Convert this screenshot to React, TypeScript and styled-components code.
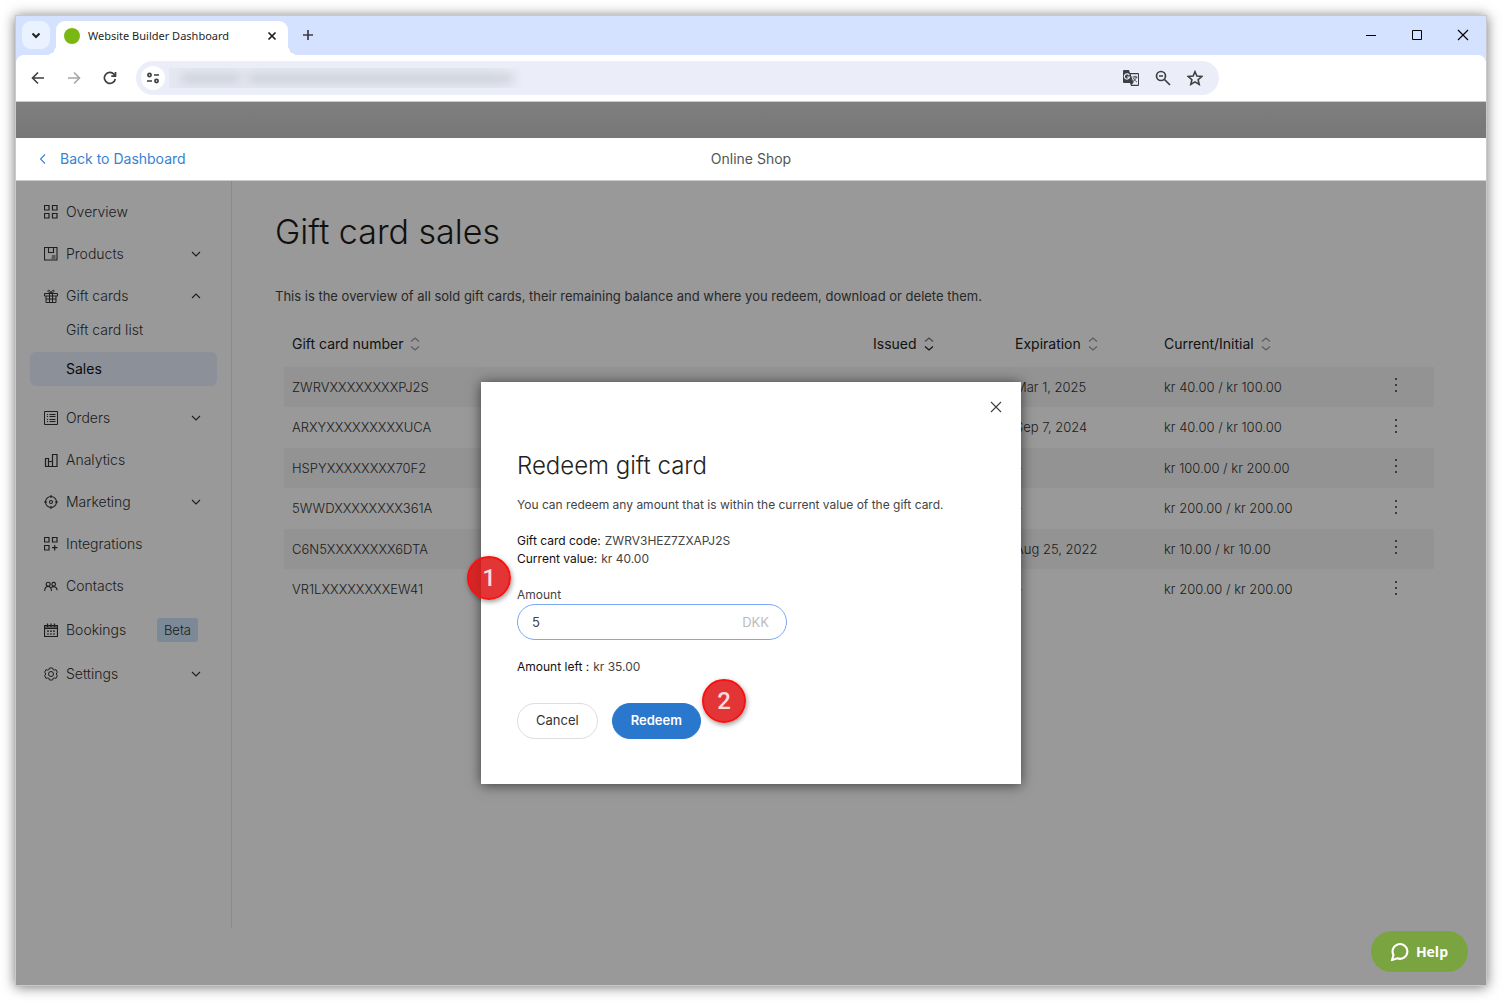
import React, { useState } from "react";
import styled, { createGlobalStyle, css } from "styled-components";

const GlobalStyle = createGlobalStyle`
  *, *::before, *::after { box-sizing: border-box; }
  body { margin: 0; background: #fff; font-family: Inter, "Open Sans", sans-serif; font-size: 14px; line-height: 20px; color: #444; }
  button { border: 0; padding: 0; background: none; color: inherit; font: inherit; cursor: pointer; }
  h1, h2, p, ul, dl, dd { margin: 0; padding: 0; }
  ul { list-style: none; }
  svg { display: block; flex: none; }
`;

const Page = styled.div`
  display: flex;
  min-height: 100vh;
  padding: 15px;
`;

const Window = styled.div`
  flex: 1;
  min-width: 0;
  display: flex;
  flex-direction: column;
  border: 1px solid #c9c9c9;
  background: #d5e2ff;
  box-shadow: 0 1px 12px rgba(0, 0, 0, 0.55);
`;

const TitleBar = styled.div`
  display: flex;
  align-items: flex-start;
  height: 39px;
  padding: 5px 0 0 6px;
`;

const TabSearch = styled.button`
  display: grid;
  place-items: center;
  width: 28px;
  height: 28px;
  margin-right: 6px;
  border-radius: 9px;
  background: #ebf2ff;
  color: #1f1f1f;
`;

const Tab = styled.div`
  position: relative;
  display: flex;
  align-items: center;
  gap: 8px;
  width: 232px;
  height: 34px;
  padding: 0 8px 5px;
  border-radius: 9px 9px 0 0;
  background: #fff;
  color: #1f1f1f;
  font: 11px/16px "Noto Sans", "Open Sans", sans-serif;
  &::before, &::after {
    content: "";
    position: absolute;
    bottom: 0;
    width: 10px;
    height: 10px;
  }
  &::before { right: 100%; background: radial-gradient(circle at 0 0, transparent 10px, #fff 10px); }
  &::after { left: 100%; background: radial-gradient(circle at 100% 0, transparent 10px, #fff 10px); }
`;

const Favicon = styled.span`
  width: 16px;
  height: 16px;
  border-radius: 50%;
  background: #7bb713;
`;

const TabTitle = styled.span`
  flex: 1;
  white-space: nowrap;
`;

const IconButton = styled.button<{ $size?: number; $color?: string }>`
  display: grid;
  place-items: center;
  flex: none;
  width: ${(p) => p.$size ?? 24}px;
  height: ${(p) => p.$size ?? 24}px;
  color: ${(p) => p.$color ?? "#3c3f43"};
`;

const NewTab = styled(IconButton)`
  margin: 2px 0 0 8px;
`;

const WindowControls = styled.div`
  display: flex;
  margin-left: auto;
  button { width: 46px; height: 28px; color: #000; }
`;

const Toolbar = styled.div`
  display: flex;
  align-items: center;
  gap: 12px;
  height: 47px;
  padding: 0 267px 0 10px;
  border-bottom: 1px solid #ccc;
  border-radius: 8px 8px 0 0;
  background: #fff;
`;

const NavButtons = styled.div`
  display: flex;
  gap: 12px;
  margin-right: 2px;
`;

const AddressBar = styled.div`
  flex: 1;
  display: flex;
  align-items: center;
  height: 34px;
  padding: 0 12px 0 5px;
  border-radius: 17px;
  background: #ebeef8;
`;

const SiteInfo = styled(IconButton)`
  border-radius: 50%;
  background: #fff;
  margin-right: 4px;
`;

const BlurredAddress = styled.div`
  display: flex;
  align-items: center;
  gap: 8px;
  width: 356px;
  height: 20px;
  padding: 0 12px;
  overflow: hidden;
  background: linear-gradient(90deg, #e5e8f1 90%, #ebeef8);
`;

const Smudge = styled.span<{ $grow: number }>`
  flex: ${(p) => p.$grow};
  height: 9px;
  background: #cdd0da;
  filter: blur(5px);
`;

const AddressActions = styled.div`
  display: flex;
  gap: 8px;
  margin-left: auto;
`;

const TopStrip = styled.div`
  height: 36px;
  background: linear-gradient(#7f7f7f, #777);
`;

const Header = styled.header`
  display: grid;
  grid-template-columns: 1fr auto 1fr;
  align-items: center;
  height: 43px;
  padding: 0 21px;
  border-bottom: 1px solid #ccc;
  background: #fff;
  color: #555;
`;

const BackLink = styled.a`
  display: flex;
  align-items: center;
  gap: 11px;
  color: #3583d3;
  text-decoration: none;
`;

const Workspace = styled.div`
  position: relative;
  flex: 1;
  display: flex;
  align-items: stretch;
  background: #fff;
`;

const Sidebar = styled.nav`
  width: 216px;
  flex: none;
  margin-bottom: 57px;
  padding: 14px;
  border-right: 1px solid #e8e8e8;
`;

const NavList = styled.ul`
  display: flex;
  flex-direction: column;
  gap: 8px;
`;

const SubList = styled.ul`
  display: flex;
  flex-direction: column;
  gap: 5px;
  padding-bottom: 7px;
`;

const rowStyle = css`
  display: flex;
  align-items: center;
  gap: 8px;
  width: 100%;
  height: 34px;
  border-radius: 6px;
  color: #333;
  text-align: left;
  text-decoration: none;
`;

const NavRow = styled.button<{ $tall?: boolean }>`
  ${rowStyle}
  padding: 0 15px 0 14px;
  height: ${(p) => (p.$tall ? 38 : 34)}px;
  font-weight: 300;
`;

const NavLabel = styled.span`
  flex: 1;
`;

const SubLink = styled.a<{ $active?: boolean }>`
  ${rowStyle}
  padding: 0 36px;
  background: ${(p) => (p.$active ? "#e8f1ff" : "none")};
  color: ${(p) => (p.$active ? "#111" : "#333")};
  font-weight: ${(p) => (p.$active ? 400 : 300)};
`;

const Beta = styled.span`
  padding: 2px 7px;
  margin-right: 4px;
  border-radius: 3px;
  background: #cde6fb;
  font-size: 13px;
`;

const Main = styled.main`
  flex: 1;
  min-width: 0;
  padding: 29px 52px 30px 43px;
`;

const Title = styled.h1`
  font-size: 34px;
  line-height: 44px;
  font-weight: 300;
  color: #1c1c1c;
`;

const Intro = styled.p`
  margin-top: 32px;
  font-size: 13px;
`;

const Table = styled.table`
  width: calc(100% - 9px);
  margin: 15px 0 0 9px;
  table-layout: fixed;
  border-collapse: separate;
  border-spacing: 0;
  th, td { padding: 0 8px; text-align: left; white-space: nowrap; }
  th { height: 46px; color: #222; font-weight: 400; }
  td { height: 40px; padding-bottom: 1px; color: #333; font-size: 13px; font-weight: 300; }
  td:last-child { padding-bottom: 4px; }
  tbody tr:nth-child(odd) td { background: #f5f5f5; }
  tbody tr:nth-child(even) td { height: 41px; }
`;

const Col = styled.col<{ $width?: number }>`
  width: ${(p) => (p.$width ? `${p.$width}px` : "auto")};
`;

const SortButton = styled.button`
  display: flex;
  align-items: center;
  gap: 7px;
`;

const Backdrop = styled.div`
  position: absolute;
  inset: 0;
  display: grid;
  place-items: center;
  background: rgba(0, 0, 0, 0.4);
`;

const Dialog = styled.section`
  position: relative;
  width: 540px;
  padding: 16px 36px 45px;
  background: #fff;
  box-shadow: 0 1px 12px rgba(0, 0, 0, 0.6);
  font-size: 12px;
  line-height: 18px;
`;

const CloseRow = styled.div`
  display: flex;
  justify-content: flex-end;
  margin-right: -20px;
`;

const DialogTitle = styled.h2`
  margin-top: 36px;
  color: #222;
  font-size: 24px;
  line-height: 28px;
  font-weight: 300;
`;

const DialogText = styled.p`
  margin-top: 16px;
`;

const Facts = styled.dl`
  margin-top: 18px;
`;

const Fact = styled.div`
  display: flex;
  gap: 4px;
  dt { color: #111; }
`;

const AmountField = styled.div`
  display: flex;
  flex-direction: column;
  width: 270px;
  margin: 18px 0;
`;

const InputShell = styled.div`
  display: flex;
  align-items: center;
  height: 36px;
  padding: 0 17px 0 14px;
  border: 1px solid #7ba5f5;
  border-radius: 18px;
  color: #bbb;
  font-size: 13px;
`;

const AmountInput = styled.input`
  flex: 1;
  min-width: 0;
  padding: 0;
  border: 0;
  outline: 0;
  background: none;
  color: #444;
  font: inherit;
`;

const Actions = styled.div`
  display: flex;
  gap: 14px;
  margin-top: 27px;
`;

const Action = styled.button<{ $primary?: boolean }>`
  height: 36px;
  padding: 0 18px 2px;
  border: 1px solid ${(p) => (p.$primary ? "#2a78cd" : "#ddd")};
  border-radius: 18px;
  background: ${(p) => (p.$primary ? "#2a78cd" : "#fff")};
  color: ${(p) => (p.$primary ? "#fff" : "#333")};
  font-size: 13px;
  font-weight: ${(p) => (p.$primary ? 600 : 400)};
`;

const Step = styled.span<{ $left: number; $top: number }>`
  position: absolute;
  left: ${(p) => p.$left}px;
  top: ${(p) => p.$top}px;
  display: grid;
  place-items: center;
  width: 44px;
  height: 44px;
  border: 2px solid #fb1010;
  border-radius: 50%;
  background: rgba(222, 20, 20, 0.86);
  box-shadow: 1px 2px 5px rgba(0, 0, 0, 0.4);
  color: #fbdcdc;
  font: 500 24px/28px Roboto, sans-serif;
`;

const HelpButton = styled.button`
  position: absolute;
  right: 18px;
  bottom: 13px;
  display: flex;
  align-items: center;
  gap: 7px;
  height: 41px;
  padding: 0 20px 0 19px;
  border-radius: 21px;
  background: #7aa43f;
  color: #fff;
  font: 700 14px/20px "Open Sans", sans-serif;
`;

type GlyphProps = { d: string; size?: number; box?: number; width?: number; children?: React.ReactNode };

function Glyph({ d, size = 14, box = 14, width = 1, children }: GlyphProps) {
  return (
    <svg width={size} height={size} viewBox={`0 0 ${box} ${box}`} fill="none" stroke="currentColor" strokeWidth={width} aria-hidden="true">
      <path d={d} />
      {children}
    </svg>
  );
}

const icons: Record<string, React.ReactNode> = {
  overview: <Glyph d="M.5.5H5V5H.5zM8.500.5H13V5H8.500zM.5 8.500H5V13H.5zM8.500 8.500H13V13H8.500z" width={1.200} />,
  products: <Glyph d="M.5.5h12.500v12.500H.5zM4.500.5v5h5v-5M8 9h3.500M7.500 11h4" width={1.100} />,
  gift: <Glyph d="M.5 4.500h13v2.500H.5zM2 7v6.500h10V7M5.500 4.500v9M8.500 4.500v9M2 10h10M7 4.500C5.500 4 3.500 3 4 1.700S6.500 1.500 7 4.500C7.500 1.500 9.500.500 10 1.700S8.500 4 7 4.500" />,
  orders: <Glyph d="M.5.5h13v13H.5zM5.500 3.500h6M5.500 5.500h6M5.500 8.500h6M5.500 10.500h6M3 3.500h1M3 5.500h1M3 8.500h1M3 10.500h1" />,
  analytics: <Glyph d="M1.500 5.500h3v8h-3zM4.500 8.500h4v5h-4zM8.500 1.500H13v12H8.500z" width={1.200} />,
  marketing: (
    <Glyph d="M7 0v3M7 11v3M0 7h3M11 7h3" width={1.100}>
      <circle cx="7" cy="7" r="5.500" />
      <circle cx="7" cy="7" r="1.500" />
    </Glyph>
  ),
  integrations: <Glyph d="M.5.5H5V5H.5zM8.500.5H13V5H8.500zM.5 8.500H5V13H.5zM10.700 8v5.500M8 10.700h5.500" width={1.200} />,
  contacts: (
    <Glyph d="M.7 12c0-3 1.500-4.500 3.400-4.500S7.300 9 7.500 12M7.300 8.700c1-1.500 5.500-2 5.800 2.500" width={1.100}>
      <circle cx="4.200" cy="5.200" r="2" />
      <circle cx="9.700" cy="5.200" r="1.800" />
    </Glyph>
  ),
  bookings: <Glyph d="M.5 2.500h13v11H.5zM.5 4h13M.5 5.500h13M3.500.5V4M7 .5V4M10.500.5V4M3 8.200h2M6 8.200h2M9 8.200h2M3 11h2M6 11h2M9 11h2" width={1.200} />,
  settings: (
    <Glyph d="M5.400 1h3.200l.5 1.700 1.500.3 1.500-.3 1.200 2.500L12.200 7l1.100 1.800-1.200 2.500-1.500-.3-1.500.3-.5 1.700H5.400l-.5-1.700-1.500-.3-1.500.3L.7 8.800 1.800 7 .7 5.200l1.200-2.500 1.500.3 1.500-.3z">
      <circle cx="7" cy="7" r="2.500" />
    </Glyph>
  ),
};

function Chevron({ up }: { up?: boolean }) {
  return <Glyph d={up ? "M2 8 6 4l4 4" : "M2 4l4 4 4-4"} size={12} box={12} width={1.100} />;
}

function SortIcon({ active }: { active?: boolean }) {
  return (
    <svg width="10" height="14" viewBox="0 0 10 14" fill="none" strokeWidth="1.200" aria-hidden="true">
      <path d="M1 4.500 5 1l4 3.500" stroke={active ? "#777" : "#999"} />
      <path d="M1 9.500 5 13l4-3.500" stroke={active ? "#222" : "#999"} />
    </svg>
  );
}

type NavEntry = { id: string; label: string; arrow?: boolean; beta?: boolean; children?: string[] };

const navigation: NavEntry[] = [
  { id: "overview", label: "Overview" },
  { id: "products", label: "Products", arrow: true },
  { id: "gift", label: "Gift cards", arrow: true, children: ["Gift card list", "Sales"] },
  { id: "orders", label: "Orders", arrow: true },
  { id: "analytics", label: "Analytics" },
  { id: "marketing", label: "Marketing", arrow: true },
  { id: "integrations", label: "Integrations" },
  { id: "contacts", label: "Contacts" },
  { id: "bookings", label: "Bookings", beta: true },
  { id: "settings", label: "Settings", arrow: true },
];

const columns = ["Gift card number", "Issued", "Expiration", "Current/Initial"];

const sales = [
  ["ZWRVXXXXXXXXPJ2S", "Mar 1, 2025", "kr 40.00 / kr 100.00"],
  ["ARXYXXXXXXXXXUCA", "Sep 7, 2024", "kr 40.00 / kr 100.00"],
  ["HSPYXXXXXXXX70F2", "–", "kr 100.00 / kr 200.00"],
  ["5WWDXXXXXXXX361A", "–", "kr 200.00 / kr 200.00"],
  ["C6N5XXXXXXXX6DTA", "Aug 25, 2022", "kr 10.00 / kr 10.00"],
  ["VR1LXXXXXXXXEW41", "–", "kr 200.00 / kr 200.00"],
];

function BrowserChrome() {
  return (
    <>
      <TitleBar>
        <TabSearch aria-label="Search tabs"><Glyph d="m3.500 5.500 3.500 3.500 3.500-3.500" width={2} /></TabSearch>
        <Tab>
          <Favicon />
          <TabTitle>Website Builder Dashboard</TabTitle>
          <IconButton $size={16} $color="#1f1f1f" aria-label="Close tab"><Glyph d="m3.500 3.500 7 7m0-7-7 7" width={1.700} /></IconButton>
        </Tab>
        <NewTab aria-label="New tab"><Glyph d="M7 2v10M2 7h10" width={1.700} /></NewTab>
        <WindowControls>
          <IconButton aria-label="Minimize"><Glyph d="M2 7.500h10" /></IconButton>
          <IconButton aria-label="Maximize"><Glyph d="M2.500 2.500h9v9h-9z" /></IconButton>
          <IconButton aria-label="Close"><Glyph d="m2 2 10 10m0-10L2 12" width={1.200} /></IconButton>
        </WindowControls>
      </TitleBar>
      <Toolbar>
        <NavButtons>
          <IconButton aria-label="Back"><Glyph d="M13 7H1.500M7 1.500 1.500 7 7 12.500" width={1.600} /></IconButton>
          <IconButton $color="#a5a7aa" aria-label="Forward"><Glyph d="M1 7h11.500M7 1.500 12.500 7 7 12.500" width={1.600} /></IconButton>
          <IconButton aria-label="Reload">
            <Glyph d="M12.300 8A5.500 5.500 0 1 1 11 3.200l1 1.200M12.500 1v4.200H8.300" width={1.700} />
          </IconButton>
        </NavButtons>
        <AddressBar>
          <SiteInfo aria-label="Site information">
            <Glyph d="M8 4h5M1 10h5" width={1.700}>
              <circle cx="3.500" cy="4" r="1.600" />
              <circle cx="10.500" cy="10" r="1.600" />
            </Glyph>
          </SiteInfo>
          <BlurredAddress>
            <Smudge $grow={2} />
            <Smudge $grow={9} />
          </BlurredAddress>
          <AddressActions>
            <IconButton aria-label="Translate this page">
              <svg width="18" height="18" viewBox="0 0 18 18" aria-hidden="true">
                <path d="M2 1h5l1 3h8a1 1 0 0 1 1 1v11a1 1 0 0 1-1 1H9l-1-3H2a1 1 0 0 1-1-1V2a1 1 0 0 1 1-1z" fill="#3c3f43" />
                <path d="M8.700 5.200H16v10.600H9.500l2-2z" fill="#ebeef8" />
                <path d="M7.300 6.300A2.600 2.600 0 1 0 7.500 8H5" fill="none" stroke="#ebeef8" strokeWidth="1.200" />
                <path d="M10.500 8h5M13 6.800V8M14.500 8c-.5 2-2 3.500-3.500 4.500M11.500 9c.7 1.700 2 3.200 3.300 4" fill="none" stroke="#3c3f43" />
              </svg>
            </IconButton>
            <IconButton aria-label="Zoom">
              <Glyph d="m9.500 9.500 5.500 5.500M4 6h4" size={16} box={16} width={1.700}><circle cx="6" cy="6" r="4.500" /></Glyph>
            </IconButton>
            <IconButton aria-label="Bookmark this page">
              <Glyph d="m8 1.700 1.900 4.400 4.800.4-3.600 3.200 1.100 4.700L8 11.900l-4.200 2.500 1.100-4.700L1.300 6.500l4.800-.4z" size={16} box={16} width={1.600} />
            </IconButton>
          </AddressActions>
        </AddressBar>
      </Toolbar>
    </>
  );
}

function ShopNavigation() {
  return (
    <Sidebar aria-label="Online Shop">
      <NavList>
        {navigation.map((item) => (
          <li key={item.id}>
            <NavRow $tall={item.beta} aria-expanded={item.arrow ? Boolean(item.children) : undefined}>
              {icons[item.id]}
              <NavLabel>{item.label}</NavLabel>
              {item.beta && <Beta>Beta</Beta>}
              {item.arrow && <Chevron up={Boolean(item.children)} />}
            </NavRow>
            {item.children && (
              <SubList>
                {item.children.map((name) => (
                  <li key={name}><SubLink href="#" $active={name === "Sales"}>{name}</SubLink></li>
                ))}
              </SubList>
            )}
          </li>
        ))}
      </NavList>
    </Sidebar>
  );
}

function SalesTable() {
  return (
    <Table>
      <colgroup>
        <Col /><Col $width={142} /><Col $width={149} /><Col $width={224} /><Col $width={54} />
      </colgroup>
      <thead>
        <tr>
          {columns.map((name) => (
            <th key={name} scope="col">
              <SortButton>{name}<SortIcon active={name === "Issued"} /></SortButton>
            </th>
          ))}
          <th aria-label="Actions" />
        </tr>
      </thead>
      <tbody>
        {sales.map(([code, expires, value]) => (
          <tr key={code}>
            <td>{code}</td>
            <td />
            <td>{expires}</td>
            <td>{value}</td>
            <td>
              <IconButton $size={16} $color="#333" aria-label={`Actions for ${code}`}>
                <svg width="4" height="14" viewBox="0 0 4 14" fill="currentColor" aria-hidden="true">
                  <circle cx="2" cy="1" r="1" />
                  <circle cx="2" cy="7" r="1" />
                  <circle cx="2" cy="13" r="1" />
                </svg>
              </IconButton>
            </td>
          </tr>
        ))}
      </tbody>
    </Table>
  );
}

function RedeemDialog() {
  const [amount, setAmount] = useState("5");
  return (
    <Dialog role="dialog" aria-labelledby="redeem-title">
      <CloseRow>
        <IconButton $size={18} aria-label="Close dialog"><Glyph d="m2 2 10 10m0-10L2 12" width={1.100} /></IconButton>
      </CloseRow>
      <DialogTitle id="redeem-title">Redeem gift card</DialogTitle>
      <DialogText>You can redeem any amount that is within the current value of the gift card.</DialogText>
      <Facts>
        <Fact><dt>Gift card code:</dt><dd>ZWRV3HEZ7ZXAPJ2S</dd></Fact>
        <Fact><dt>Current value:</dt><dd>kr 40.00</dd></Fact>
      </Facts>
      <AmountField>
        <label htmlFor="amount">Amount</label>
        <InputShell>
          <AmountInput id="amount" value={amount} onChange={(e) => setAmount(e.target.value)} />
          <span>DKK</span>
        </InputShell>
      </AmountField>
      <dl>
        <Fact><dt>Amount left :</dt><dd>kr {(40 - Number(amount || 0)).toFixed(2)}</dd></Fact>
      </dl>
      <Actions>
        <Action>Cancel</Action>
        <Action $primary>Redeem</Action>
      </Actions>
      <Step $left={-14} $top={174}>1</Step>
      <Step $left={221} $top={297}>2</Step>
    </Dialog>
  );
}

export default function App() {
  return (
    <>
      <GlobalStyle />
      <Page>
        <Window>
          <BrowserChrome />
          <TopStrip />
          <Header>
            <BackLink href="#"><Glyph d="M8 1.500 3.500 6l4.500 4.500" size={12} box={12} width={1.100} />Back to Dashboard</BackLink>
            <span>Online Shop</span>
          </Header>
          <Workspace>
            <ShopNavigation />
            <Main>
              <Title>Gift card sales</Title>
              <Intro>This is the overview of all sold gift cards, their remaining balance and where you redeem, download or delete them.</Intro>
              <SalesTable />
            </Main>
            <Backdrop><RedeemDialog /></Backdrop>
            <HelpButton>
              <Glyph d="M3.300 12.300A7 7 0 1 1 7 15.500L2 17l1.300-4.700z" size={19} box={18} width={2} />
              Help
            </HelpButton>
          </Workspace>
        </Window>
      </Page>
    </>
  );
}
